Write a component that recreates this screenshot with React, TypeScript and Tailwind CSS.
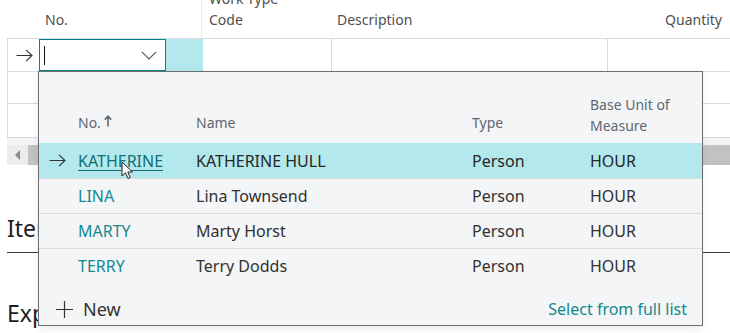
type Resource = { no: string; name: string; type: string; unit: string };

const resources: Resource[] = [
  { no: "KATHERINE", name: "KATHERINE HULL", type: "Person", unit: "HOUR" },
  { no: "LINA", name: "Lina Townsend", type: "Person", unit: "HOUR" },
  { no: "MARTY", name: "Marty Horst", type: "Person", unit: "HOUR" },
  { no: "TERRY", name: "Terry Dodds", type: "Person", unit: "HOUR" },
];

const FONT = "font-['Segoe_UI','Noto_Sans','Open_Sans',sans-serif]";

// Thin "current row" arrow, as drawn in the grid gutter.
function RowArrow() {
  return (
    <svg width="17" height="13" viewBox="0 0 17 13" fill="none" stroke="#333" strokeWidth="1.1">
      <path d="M0.5 6.5 H16 M10 0.8 L16 6.5 L10 12.2" />
    </svg>
  );
}

// Mouse pointer hovering the first lookup entry.
function Pointer() {
  return (
    <svg width="14" height="20" viewBox="0 0 14 20" className="pointer-events-none absolute left-[121px] top-[161px]">
      <path d="M1 1 L1 15 L4.5 11.8 L7 17.5 L9.2 16.5 L6.8 11 L11.5 11 Z" fill="#fff" stroke="#222" strokeWidth="1" strokeLinejoin="round" />
    </svg>
  );
}

function Lookup() {
  return (
    <div className="absolute left-[38px] top-[71px] w-[665px] h-[255px] border border-[#6e6e6e] bg-[#f4f5f7] shadow-[0_3px_8px_rgba(0,0,0,0.08)] flex flex-col">
      {/* column captions */}
      <div className="h-[71px] flex items-end pb-[7px] text-[14px] leading-[21px] text-[#5f6670]">
        <div className="w-[39px]" />
        <div className="w-[118px] mb-[3px] flex items-center gap-[3px]">
          No.
          <svg width="8" height="12" viewBox="0 0 8 12" fill="none" stroke="#5f6670" strokeWidth="1.6" className="mb-[3px]">
            <path d="M4 11.5 V1.5 M0.8 4.6 L4 1.2 L7.2 4.6" />
          </svg>
        </div>
        <div className="w-[276px] mb-[3px]">Name</div>
        <div className="w-[118px] mb-[3px]">Type</div>
        <div className="w-[110px]">
          Base Unit of
          <br />
          Measure
        </div>
      </div>
      {resources.map((r, i) => (
        <div
          key={r.no}
          className={
            i === 0
              ? "h-[35px] flex items-center bg-[#b3e8ec] text-[16px] text-[#262626]"
              : "h-[35px] flex items-center border-t border-[#d8dbe0] text-[16px] text-[#323130]"
          }
        >
          <div className="w-[39px] flex pl-[10px]">{i === 0 && <RowArrow />}</div>
          <div className="w-[118px]">
            <span className={i === 0 ? "text-[#0e6f74] underline underline-offset-[3px]" : "text-[#138a8e]"}>{r.no}</span>
          </div>
          <div className="w-[276px]">{r.name}</div>
          <div className="w-[118px]">{r.type}</div>
          <div className="w-[110px]">{r.unit}</div>
        </div>
      ))}
      <div className="mt-auto h-[42px] flex items-center justify-between pl-[16px] pr-[15px] pt-[10px]">
        <div className="flex items-center gap-[9px] text-[18px] text-[#323130]">
          <svg width="19" height="19" viewBox="0 0 19 19" fill="none" stroke="#333" strokeWidth="1.2">
            <path d="M9.5 1 V18 M1 9.5 H18" />
          </svg>
          New
        </div>
        <div className="text-[16px] text-[#138a8e]">Select from full list</div>
      </div>
    </div>
  );
}

export default function App() {
  return (
    <div className={`${FONT} relative w-[730px] h-[333px] overflow-hidden bg-white`}>
      {/* header captions */}
      <div className="h-[38px] flex text-[14px] leading-[21px] text-[#505050]">
        <div className="w-[38px]" />
        <div className="w-[164px] flex items-end pb-[8px] pl-[7px] border-r border-[#ececec]">No.</div>
        <div className="w-[129px] flex items-end pb-[8px] pl-[7px]">
          Work Type
          <br />
          Code
        </div>
        <div className="w-[276px] flex items-end pb-[8px] pl-[6px]">Description</div>
        <div className="flex-1 flex items-end justify-end pb-[8px] pr-[8px]">Quantity</div>
      </div>

      {/* lines grid */}
      <div className="ml-[7px] border-t border-l border-[#d9d9de]">
        <div className="h-[33px] flex border-b border-[#d9d9de]">
          <div className="w-[31px] flex items-center pl-[8px]">
            <RowArrow />
          </div>
          <div className="w-[127px] flex items-center justify-between border border-[#00838a] pl-[4px] pr-[8px]">
            <span className="h-[19px] w-px bg-[#111]" />
            <svg width="16" height="9" viewBox="0 0 16 9" fill="none" stroke="#555" strokeWidth="1.1">
              <path d="M0.8 0.8 L8 8 L15.2 0.8" />
            </svg>
          </div>
          <div className="w-[37px] bg-[#b3e8ec]" />
          <div className="w-[129px] border-r border-[#d9d9de]" />
          <div className="w-[276px] border-r border-[#d9d9de]" />
          <div className="flex-1" />
        </div>
        <div className="h-[32px] flex border-b border-[#d9d9de]">
          <div className="w-[31px] border-r border-[#d9d9de]" />
        </div>
        <div className="h-[34px] flex border-b border-[#d9d9de]">
          <div className="w-[31px] border-r border-[#d9d9de]" />
        </div>
      </div>
      {/* horizontal scrollbar */}
      <div className="ml-[7px] h-[7px] bg-[#f3f4f6]" />
      <div className="ml-[7px] h-[20px] flex items-center bg-[#ececec]">
        <div className="w-[21px] flex justify-center">
          <span className="border-y-[5px] border-r-[5px] border-y-transparent border-r-[#8a8a8a]" />
        </div>
        <div className="flex-1 h-full bg-[#c2c2c2]" />
      </div>

      {/* sections below */}
      <div className="mt-[48px] ml-[7px] pb-[9px] border-b border-[#3a3a3a] text-[23px] leading-[30px] text-[#1e1e1e]">Item</div>
      <div className="mt-[45px] ml-[7px] text-[23px] leading-[30px] text-[#1e1e1e]">Expenses</div>

      <Lookup />
      <Pointer />
    </div>
  );
}
